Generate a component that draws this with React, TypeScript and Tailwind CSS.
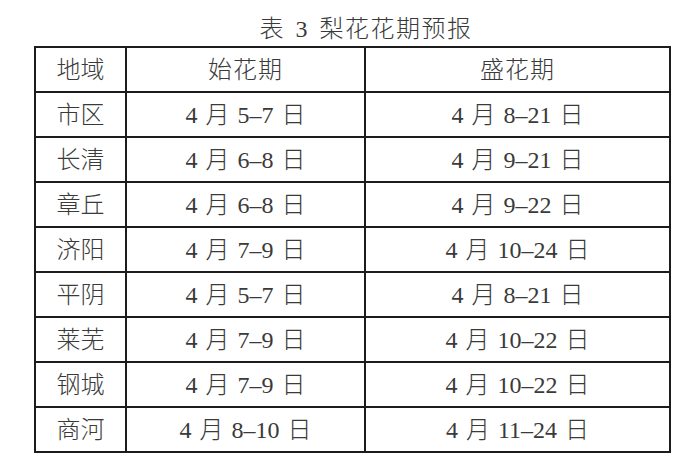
import React from "react";

const rows: [string, string, string][] = [
  ["市区", "4 月 5–7 日", "4 月 8–21 日"],
  ["长清", "4 月 6–8 日", "4 月 9–21 日"],
  ["章丘", "4 月 6–8 日", "4 月 9–22 日"],
  ["济阳", "4 月 7–9 日", "4 月 10–24 日"],
  ["平阴", "4 月 5–7 日", "4 月 8–21 日"],
  ["莱芜", "4 月 7–9 日", "4 月 10–22 日"],
  ["钢城", "4 月 7–9 日", "4 月 10–22 日"],
  ["商河", "4 月 8–10 日", "4 月 11–24 日"],
];

const font = {
  fontFamily: '"Liberation Serif", "Noto Sans CJK SC", serif',
};

export default function App() {
  return (
    <div
      className="w-[700px] h-[468px] bg-white text-[#3a3a3a] overflow-hidden font-light"
      style={font}
    >
      <div className="flex justify-center pl-[32px] pt-[17px] text-[24px] leading-[24px] h-[46px]">
        <span className="tracking-[1.5px] [word-spacing:3px] whitespace-pre">表 3 梨花花期预报</span>
      </div>
      <div className="pl-[34px]">
        <table className="border-collapse table-fixed text-[24px] leading-[24px]">
          <colgroup>
            <col className="w-[91px]" />
            <col className="w-[239px]" />
            <col className="w-[305px]" />
          </colgroup>
          <thead>
            <tr className="h-[45px]">
              <th className="border-2 border-[#1c1c1c] font-light text-center p-0">地域</th>
              <th className="border-2 border-[#1c1c1c] font-light text-center p-0 tracking-[1px]">始花期</th>
              <th className="border-2 border-[#1c1c1c] font-light text-center p-0 tracking-[1px]">盛花期</th>
            </tr>
          </thead>
          <tbody>
            {rows.map((r) => (
              <tr key={r[0]} className="h-[45px]">
                <td className="border-2 border-[#1c1c1c] text-center p-0">{r[0]}</td>
                <td className="border-2 border-[#1c1c1c] text-center p-0 whitespace-pre [word-spacing:2px]">{r[1]}</td>
                <td className="border-2 border-[#1c1c1c] text-center p-0 whitespace-pre [word-spacing:2px]">{r[2]}</td>
              </tr>
            ))}
          </tbody>
        </table>
      </div>
    </div>
  );
}
